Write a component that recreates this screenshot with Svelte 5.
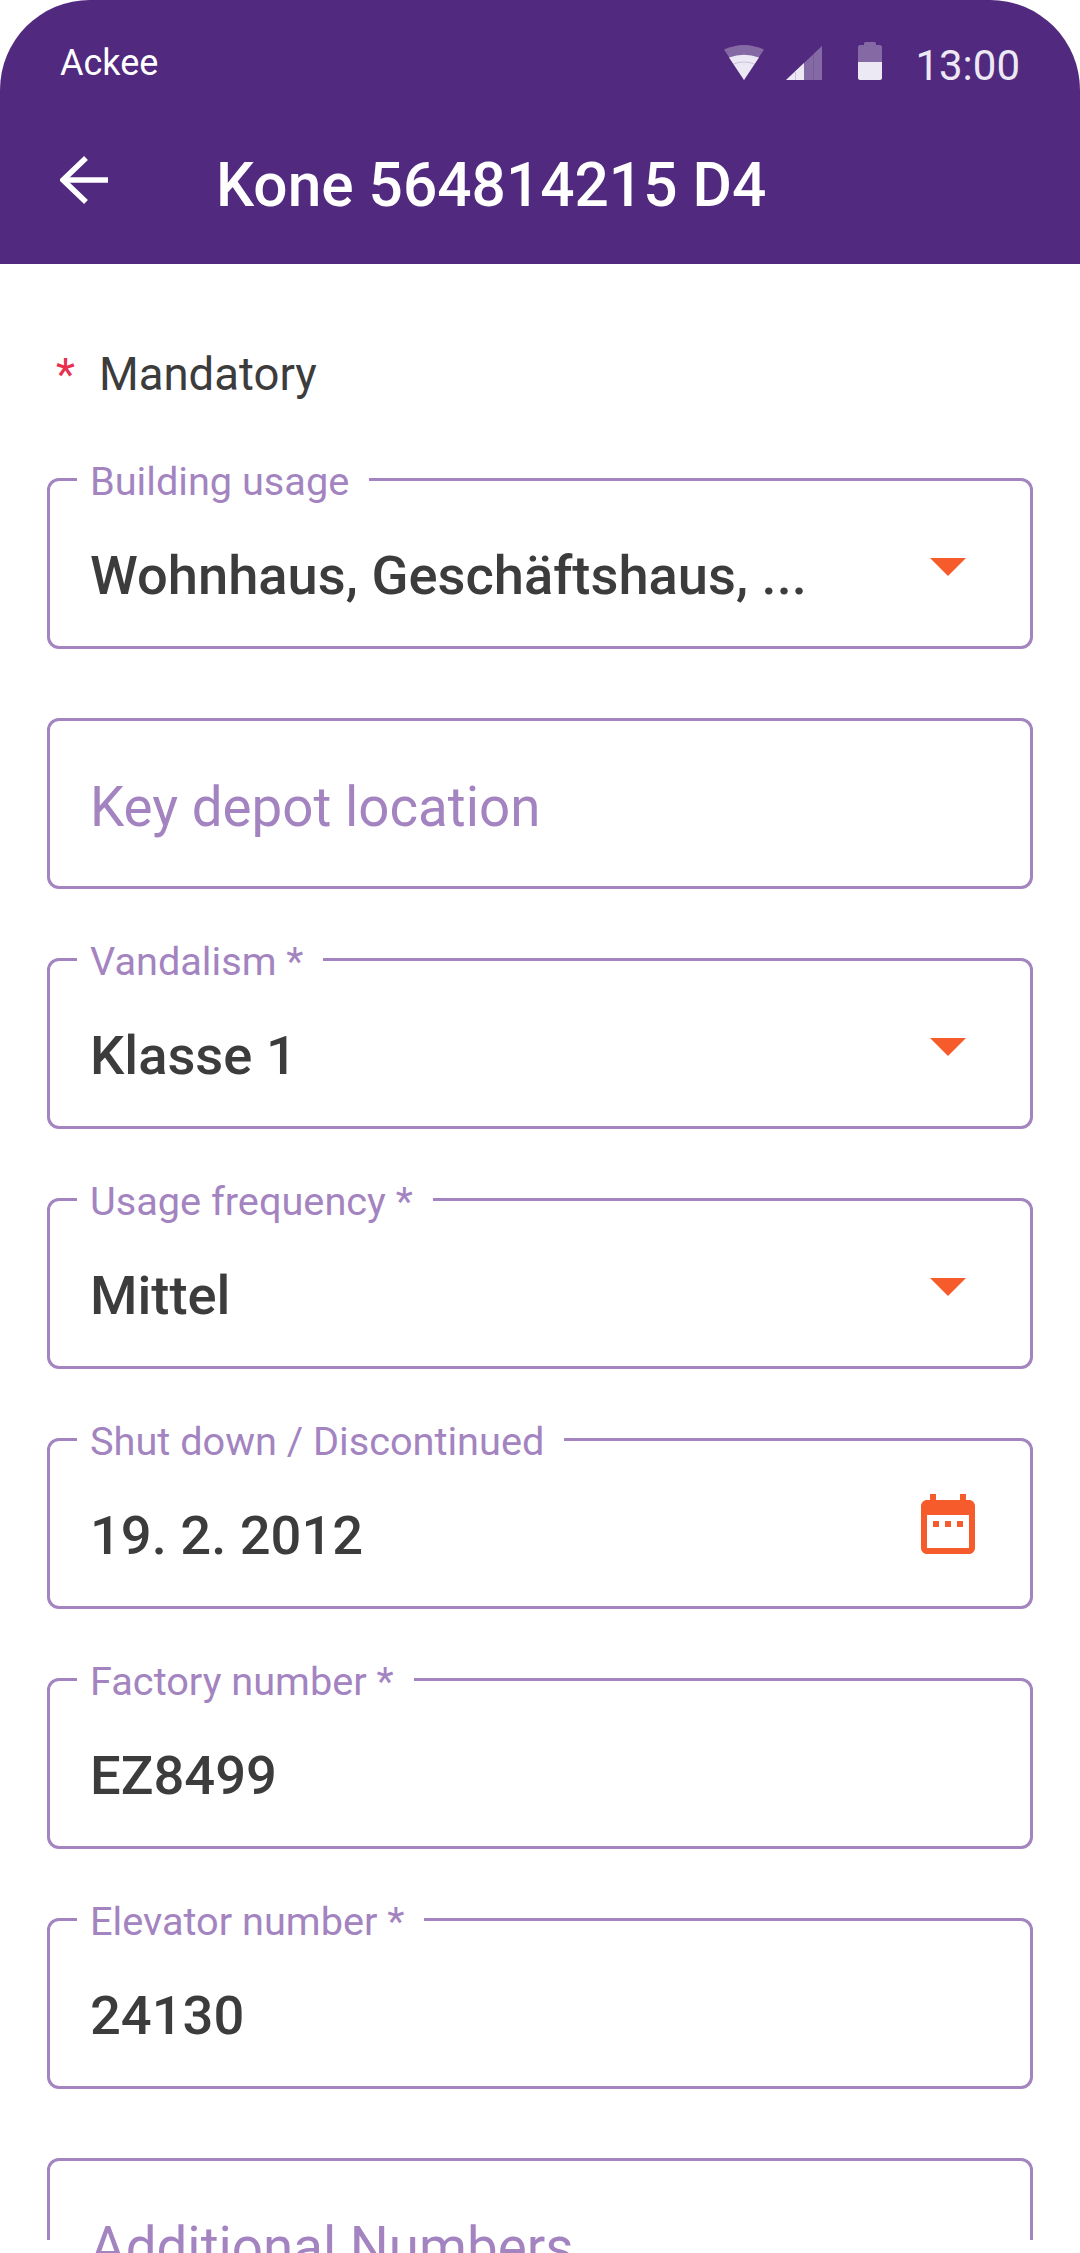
<script>
	const fields = [
		{ label: "Building usage", value: "Wohnhaus, Geschäftshaus, ...", icon: "arrow" },
		{ placeholder: "Key depot location" },
		{ label: "Vandalism *", value: "Klasse 1", icon: "arrow" },
		{ label: "Usage frequency *", value: "Mittel", icon: "arrow" },
		{ label: "Shut down / Discontinued", value: "19. 2. 2012", icon: "calendar" },
		{ label: "Factory number *", value: "EZ8499" },
		{ label: "Elevator number *", value: "24130" },
		{ placeholder: "Additional Numbers" }
	];
</script>

<div class="screen">
	<header class="appbar">
		<div class="statusbar">
			<span class="carrier">Ackee</span>
			<div class="status-icons">
				<!-- wifi -->
				<svg class="wifi" width="40" height="35" viewBox="0 0 40 35">
					<path d="M0 4.500Q20 -4.500 40 4.500L20 35Z" fill="#fff" fill-opacity="0.3"></path>
					<path d="M5 12.500Q20 7 35 12.500L20 35Z" fill="#ece8f4"></path>
					<path d="M9.500 19Q20 15 30.500 19" fill="none" stroke="#51297e" stroke-opacity="0.2"></path>
				</svg>
				<!-- signal -->
				<svg class="signal" width="36" height="34" viewBox="0 0 36 34">
					<path d="M0 34L36 0V34Z" fill="#fff" fill-opacity="0.3"></path>
					<path d="M0 34L18 17V34Z" fill="#ece8f4"></path>
					<path d="M9.500 26V34M27.500 8V34" stroke="#51297e" stroke-opacity="0.2"></path>
				</svg>
				<!-- battery -->
				<svg class="battery" width="24" height="38" viewBox="0 0 24 38">
					<path d="M6 1.500C6 0.500 7 0 8 0H16C17 0 18 0.500 18 1.500V3H22C23 3 24 4 24 5V20H0V5C0 4 1 3 2 3H6Z" fill="#fff" fill-opacity="0.3"></path>
					<path d="M0 20H24V36C24 37 23 38 22 38H2C1 38 0 37 0 36Z" fill="#ece8f4"></path>
				</svg>
				<span class="time">13:00</span>
			</div>
		</div>
		<div class="toolbar">
			<svg class="back" width="48" height="48" viewBox="0 0 48 48" fill="none" stroke="#fff" stroke-width="5.500">
				<path d="M48 24H4"></path>
				<path d="M26 2L3 24L26 46"></path>
			</svg>
			<h1>Kone 564814215 D4</h1>
		</div>
	</header>

	<main class="content">
		<p class="mandatory"><span class="star">*</span>Mandatory</p>

		<div class="fields">
			{#each fields as field}
				<div class="field">
					{#if field.label}
						<span class="label">{field.label}</span>
						<span class="value">{field.value}</span>
					{:else}
						<span class="placeholder">{field.placeholder}</span>
					{/if}

					{#if field.icon === "arrow"}
						<span class="arrow"></span>
					{:else if field.icon === "calendar"}
						<svg class="calendar" width="54" height="60" viewBox="0 0 54 60">
							<path d="M9 0H15V6H39V0H45V6H48C51.300 6 54 8.700 54 12V54C54 57.300 51.300 60 48 60H6C2.700 60 0 57.300 0 54V12C0 8.700 2.700 6 6 6H9ZM6 21V54H48V21Z" fill="#f55b2b" fill-rule="evenodd"></path>
							<rect x="12" y="27" width="6" height="6" fill="#f55b2b"></rect>
							<rect x="24" y="27" width="6" height="6" fill="#f55b2b"></rect>
							<rect x="36" y="27" width="6" height="6" fill="#f55b2b"></rect>
						</svg>
					{/if}
				</div>
			{/each}
		</div>
	</main>
</div>

<style>
	:global(html), :global(body) {
		margin: 0;
		background: #fff;
	}

	.screen {
		position: relative;
		width: 1080px;
		height: 2253px;
		overflow: hidden;
		background: #fff;
		font-family: Roboto, sans-serif;
	}

	/* the device mask hides the box sides just above the bottom edge */
	.screen::before,
	.screen::after {
		content: "";
		position: absolute;
		bottom: 0;
		z-index: 1;
		width: 12px;
		height: 13px;
		background: #fff;
	}

	.screen::before {
		left: 43px;
	}

	.screen::after {
		right: 43px;
	}

	.appbar {
		height: 264px;
		background: #51297e;
		border-radius: 90px 90px 0 0;
		color: #fff;
	}

	.statusbar {
		display: flex;
		justify-content: space-between;
		align-items: flex-start;
		height: 110px;
		padding: 0 60px;
		box-sizing: border-box;
	}

	.carrier {
		margin-top: 43px;
		font-size: 36px;
		line-height: 40px;
	}

	.status-icons {
		display: flex;
		align-items: flex-start;
		padding-top: 42px;
	}

	.wifi {
		margin: 3px 22px 0 0;
	}

	.signal {
		margin: 4px 36px 0 0;
	}

	.battery {
		margin-right: 33px;
	}

	.time {
		margin-top: 1px;
		font-size: 42px;
		line-height: 46px;
		color: #ece8f4;
	}

	.toolbar {
		display: flex;
		align-items: center;
		height: 140px;
		padding-left: 60px;
	}

	.back {
		flex: none;
	}

	.toolbar h1 {
		margin: 12px 0 0 108px;
		font-size: 60.4px;
		font-weight: 500;
		line-height: 76px;
		white-space: nowrap;
	}

	.content {
		padding: 85px 47px 0;
	}

	.mandatory {
		display: flex;
		margin: 0;
		font-size: 45.5px;
		line-height: 52px;
		color: #3c3c3c;
	}

	.star {
		width: 43px;
		margin-left: 9px;
		font-size: 44px;
		color: #e8304f;
	}

	.fields {
		display: flex;
		flex-direction: column;
		gap: 69px;
		margin-top: 77px;
	}

	.field {
		position: relative;
		box-sizing: border-box;
		display: flex;
		align-items: center;
		height: 171px;
		padding: 0 40px;
		border: 3px solid #a384c0;
		border-radius: 12px;
	}

	.label {
		position: absolute;
		top: -22px;
		left: 27px;
		padding: 0 20px 0 13px;
		background: #fff;
		font-size: 39.7px;
		line-height: 46px;
		color: #a384c0;
		white-space: nowrap;
	}

	.value {
		margin-top: 24px;
		font-size: 54.3px;
		font-weight: 500;
		color: #3c3c3c;
		white-space: nowrap;
	}

	.placeholder {
		margin-top: 6px;
		font-size: 54.7px;
		color: #a384c0;
		white-space: nowrap;
	}

	.arrow {
		position: absolute;
		top: 77px;
		right: 64px;
		border-top: 18px solid #f55b2b;
		border-left: 18px solid transparent;
		border-right: 18px solid transparent;
	}

	.calendar {
		position: absolute;
		top: 53px;
		right: 55px;
	}
</style>
